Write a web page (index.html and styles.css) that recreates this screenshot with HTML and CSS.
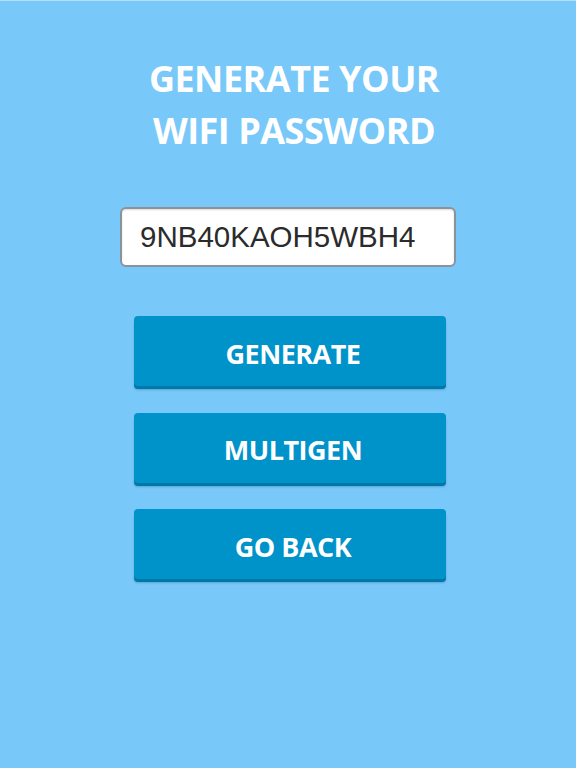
FILE: index.html
```html
<!DOCTYPE html>
<html>
<head>
<meta charset="utf-8">
<link rel="stylesheet" href="styles.css">
</head>
<body>
<div class="screen">
  <h1 class="title">GENERATE YOUR<br>WIFI PASSWORD</h1>
  <div class="field">9NB40KAOH5WBH4</div>
  <div class="buttons">
    <div class="btn">GENERATE</div>
    <div class="btn">MULTIGEN</div>
    <div class="btn">GO BACK</div>
  </div>
</div>
</body>
</html>
```
FILE: styles.css
```css
html, body {
  margin: 0;
  padding: 0;
}
body {
  width: 576px;
  height: 768px;
  background: #78c8f9;
  overflow: hidden;
}
.screen {
  height: 767px;
  border-top: 1px solid #b4e0fb;
  display: flex;
  flex-direction: column;
  align-items: center;
}
.title {
  margin: 52px 0 0 0;
  font-family: "Open Sans", sans-serif;
  font-weight: 700;
  font-size: 36px;
  line-height: 52px;
  letter-spacing: -0.5px;
  color: #ffffff;
  text-align: center;
  padding-left: 12px;
}
.field {
  margin-top: 50px;
  height: 56px;
  box-sizing: content-box;
  border: 2px solid #8c9398;
  border-radius: 6px;
  background: #ffffff;
  font-family: "Liberation Sans", Arial, sans-serif;
  font-size: 29.5px;
  color: #2b2b2b;
  line-height: 56px;
  padding: 0 0 0 18px;
  width: 314px;
  box-shadow: inset 0 1px 2px rgba(0,0,0,0.15);
}
.buttons {
  margin-top: 49px;
  display: flex;
  flex-direction: column;
  gap: 26.5px;
  margin-left: 4px;
}
.btn {
  width: 312px;
  height: 70px;
  border-radius: 4px;
  background: #0093c9;
  box-shadow: 0 3px 0 #0079a8, 0 4px 2px rgba(0,60,100,0.25);
  color: #ffffff;
  font-family: "Open Sans", sans-serif;
  font-weight: 700;
  font-size: 27px;
  letter-spacing: -0.5px;
  display: flex;
  align-items: center;
  justify-content: center;
  padding: 4px 0 0 6px;
  box-sizing: border-box;
}
```
